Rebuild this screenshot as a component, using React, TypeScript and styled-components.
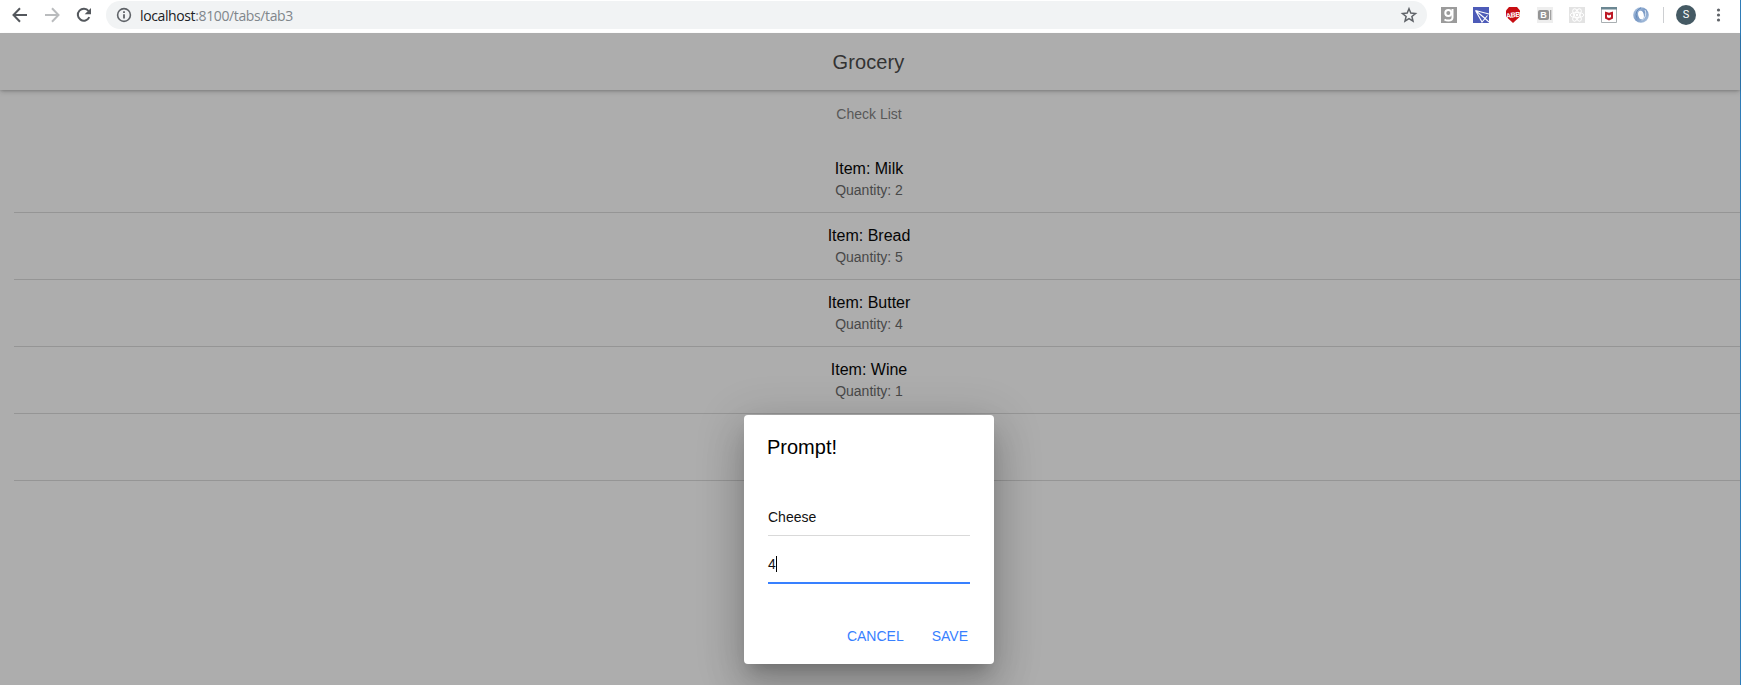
import React from 'react';
import styled, { createGlobalStyle } from 'styled-components';

const Global = createGlobalStyle`
  * { box-sizing: border-box; }
  body { margin: 0; background: #fff; overflow: hidden; font-family: "Liberation Sans", Arial, sans-serif; }
`;

const Window = styled.div`
  width: 1741px;
  height: 685px;
  display: flex;
  flex-direction: column;
  border-right: 1px solid #2f7cb8;
`;
const BrowserBar = styled.div`
  flex: none;
  height: 33px;
  padding: 1px 0 4px 12px;
  display: flex;
  align-items: center;
  background: #fff;
`;
const NavButton = styled.span<{ $gap: number }>`
  display: flex;
  margin-right: ${(p) => p.$gap}px;
`;
const AddressBar = styled.div`
  width: 1321px;
  height: 28px;
  border-radius: 14px;
  padding: 0 9px 0 10px;
  display: flex;
  align-items: center;
  background: #f1f3f4;
`;
const Url = styled.span`
  flex: 1;
  margin-left: 8px;
  padding-top: 1px;
  font: 14px/20px "Open Sans", sans-serif;
  letter-spacing: -0.38px;
  color: #80868b;
`;
const Host = styled.span`
  color: #202124;
`;
const Extensions = styled.div`
  display: flex;
  align-items: center;
  gap: 16px;
  margin-left: 14px;
`;
const Separator = styled.i`
  width: 1px;
  height: 16px;
  margin: 0 12px 0 14px;
  background: #cdcfd2;
`;
const Avatar = styled.span`
  width: 20px;
  height: 20px;
  border-radius: 50%;
  background: #455a64;
  color: #fff;
  font: 11px/20px Roboto, sans-serif;
  text-align: center;
  margin-right: 20px;
`;
const Page = styled.main`
  flex: 1;
  min-height: 0;
  position: relative;
  background: #adadad;
`;
const Header = styled.header`
  height: 57px;
  padding: 2px 3px 0 0;
  display: flex;
  align-items: center;
  justify-content: center;
  font-size: 20px;
  letter-spacing: 0.1px;
  color: #333;
  box-shadow: 0 2px 4px -1px rgba(0, 0, 0, 0.18), 0 4px 5px 0 rgba(0, 0, 0, 0.04), 0 1px 2px rgba(0, 0, 0, 0.1);
`;
const ListHeader = styled.div`
  height: 56px;
  padding: 16px 2px 0 0;
  font-size: 14px;
  line-height: 16px;
  text-align: center;
  color: #585858;
`;
const Row = styled.div`
  height: 67px;
  margin-left: 14px;
  padding: 13px 16px 0 0;
  border-bottom: 1px solid #959595;
  text-align: center;
`;
const ItemName = styled.div`
  font-size: 16px;
  line-height: 20px;
  color: #050505;
`;
const Quantity = styled.div`
  margin-top: 2px;
  font-size: 14px;
  line-height: 18px;
  color: #484848;
`;
const Dialog = styled.section`
  position: absolute;
  left: 744px;
  top: 382px;
  width: 250px;
  height: 249px;
  padding: 20px 24px 0;
  border-radius: 4px;
  background: #fff;
  box-shadow: 0 11px 15px -7px rgba(0, 0, 0, 0.2), 0 24px 38px 3px rgba(0, 0, 0, 0.14),
    0 9px 46px 8px rgba(0, 0, 0, 0.12);
`;
const DialogTitle = styled.h2`
  margin: 0 0 47px -1px;
  font-size: 20px;
  font-weight: 400;
  line-height: 24px;
  color: #000;
`;
const Field = styled.div<{ $active?: boolean }>`
  height: ${(p) => (p.$active ? 43 : 30)}px;
  padding-top: ${(p) => (p.$active ? 15 : 3)}px;
  border-bottom: ${(p) => (p.$active ? '2px solid #3880ff' : '1px solid #d9d9d9')};
  margin-bottom: ${(p) => (p.$active ? 43 : 5)}px;
  display: flex;
  align-items: flex-start;
  font-size: 14px;
  line-height: 17px;
  color: #111;
`;
const Caret = styled.i`
  width: 1px;
  height: 16px;
  background: #000;
`;
const Actions = styled.div`
  display: flex;
  justify-content: flex-end;
  gap: 28px;
  padding-right: 2px;
`;
const Action = styled.span`
  font-size: 14px;
  line-height: 18px;
  color: #3880ff;
`;

const items = [
  { name: 'Milk', quantity: 2 },
  { name: 'Bread', quantity: 5 },
  { name: 'Butter', quantity: 4 },
  { name: 'Wine', quantity: 1 },
];

export default function App() {
  return (
    <Window>
      <Global />
      <BrowserBar>
        <NavButton $gap={16}>
          <svg width="16" height="16" fill="none" stroke="#54585d" strokeWidth="2"><path d="M15 8H2M8 1.3 1.5 8 8 14.7" /></svg>
        </NavButton>
        <NavButton $gap={16}>
          <svg width="16" height="16" fill="none" stroke="#babcbe" strokeWidth="2"><path d="M1 8h13M8 1.3 14.5 8 8 14.7" /></svg>
        </NavButton>
        <NavButton $gap={14}>
          <svg width="16" height="16" fill="none" stroke="#54585d" strokeWidth="2"><path d="M13.3 10.2A6 6 0 1 1 12.6 4" /><path d="M15 1v6.3H8.7z" fill="#54585d" stroke="none" /></svg>
        </NavButton>
        <AddressBar>
          <svg width="16" height="16" fill="none" stroke="#5f6368" strokeWidth="1.6"><circle cx="8" cy="8" r="6.4" /><path d="M8 7.2v4.3M8 4.3V6" strokeWidth="1.8" /></svg>
          <Url><Host>localhost</Host>:8100/tabs/tab3</Url>
          <svg width="18" height="18" viewBox="0 0 18 18" fill="none" stroke="#5f6368" strokeWidth="1.5"><path d="m9 2.8 1.8 4.3 4.7.4-3.6 3 1.1 4.6-4-2.5-4 2.5 1.1-4.6-3.6-3 4.7-.4z" /></svg>
        </AddressBar>
        <Extensions>
          <svg width="16" height="16"><path fill="#9b9b9b" d="M0 0h16v16H0z" /><g fill="none" stroke="#fff" strokeWidth="2"><circle cx="7.3" cy="6" r="3" /><path d="M11.5 2v8.5q0 3-4 3-2.500 0-4-1" /></g></svg>
          <svg width="16" height="16"><path fill="#4d5bb8" d="M0 0h16v16H0z" /><path d="M2.500 3.500 16 7M2.500 3.500 9 15l5.500-6.500M2.500 3.500l9 7.500M11.500 11l4.500 4" fill="none" stroke="#fff" strokeWidth="1.1" /></svg>
          <svg width="16" height="16"><path fill="#c70d12" d="m4 0h8l3 3.500v6L8 16 1 9.500v-6z" /><text x="8" y="10.500" textAnchor="middle" fontFamily="Liberation Sans" fontWeight="700" fontSize="7.200" letterSpacing="-.5" fill="#fff" transform="rotate(-8 8 8)">ABB</text></svg>
          <svg width="16" height="16"><path fill="#eee" d="M0 0h16v16H0z" /><rect x="1" y="3" width="11" height="10" rx="2" fill="#949494" /><path d="M13.700 3v10" stroke="#999" strokeWidth="1.200" /><text x="6.500" y="11.200" textAnchor="middle" fontFamily="Liberation Sans" fontWeight="700" fontSize="9" fill="#fff">B</text></svg>
          <svg width="16" height="16"><path fill="#e3e3e3" d="M0 0h16v16H0z" /><g fill="none" stroke="#fff"><ellipse cx="8" cy="8" rx="6.800" ry="2.600" /><ellipse cx="8" cy="8" rx="6.800" ry="2.600" transform="rotate(60 8 8)" /><ellipse cx="8" cy="8" rx="6.800" ry="2.600" transform="rotate(120 8 8)" /></g><circle cx="8" cy="8" r="1.200" fill="#fff" /></svg>
          <svg width="16" height="16"><path fill="#fff" stroke="#a9afb2" d="M.5.5h15v15H.5z" /><path fill="#6b8792" d="M0 0h16v2.500H0z" /><path d="m4 4.500 4 1.300 4-1.300v7L8 13.500 4 11.500z" fill="#bd1825" /><path d="M6 7.500v2.700l2 .8 2-.8V7.500l-2 .9z" fill="#fff" /></svg>
          <svg width="16" height="16" fill="none"><defs><linearGradient id="ring" x1="0" y1="0" x2="1" y2="1"><stop stopColor="#b9cde6" /><stop offset=".5" stopColor="#7898c4" /><stop offset="1" stopColor="#b8cce4" /></linearGradient></defs><circle cx="8" cy="8" r="7.800" fill="url(#ring)" /><ellipse cx="8" cy="8" rx="2.800" ry="4.300" fill="#fff" transform="rotate(-12 8 8)" /><path d="M8 .8Q1.500 4 3.500 10.500" stroke="#5f85b7" /><path d="M12 3q2.500 6-3 10.500" stroke="#dce7f4" /></svg>
        </Extensions>
        <Separator />
        <Avatar>S</Avatar>
        <svg width="6" height="16" fill="#5f6368"><circle cx="2.500" cy="3" r="1.600" /><circle cx="2.500" cy="8" r="1.600" /><circle cx="2.500" cy="13" r="1.600" /></svg>
      </BrowserBar>
      <Page>
        <Header>Grocery</Header>
        <ListHeader>Check List</ListHeader>
        {items.map((item) => (
          <Row key={item.name}>
            <ItemName>Item: {item.name}</ItemName>
            <Quantity>Quantity: {item.quantity}</Quantity>
          </Row>
        ))}
        <Row />
        <Dialog>
          <DialogTitle>Prompt!</DialogTitle>
          <Field>Cheese</Field>
          <Field $active>4<Caret /></Field>
          <Actions>
            <Action>CANCEL</Action>
            <Action>SAVE</Action>
          </Actions>
        </Dialog>
      </Page>
    </Window>
  );
}
